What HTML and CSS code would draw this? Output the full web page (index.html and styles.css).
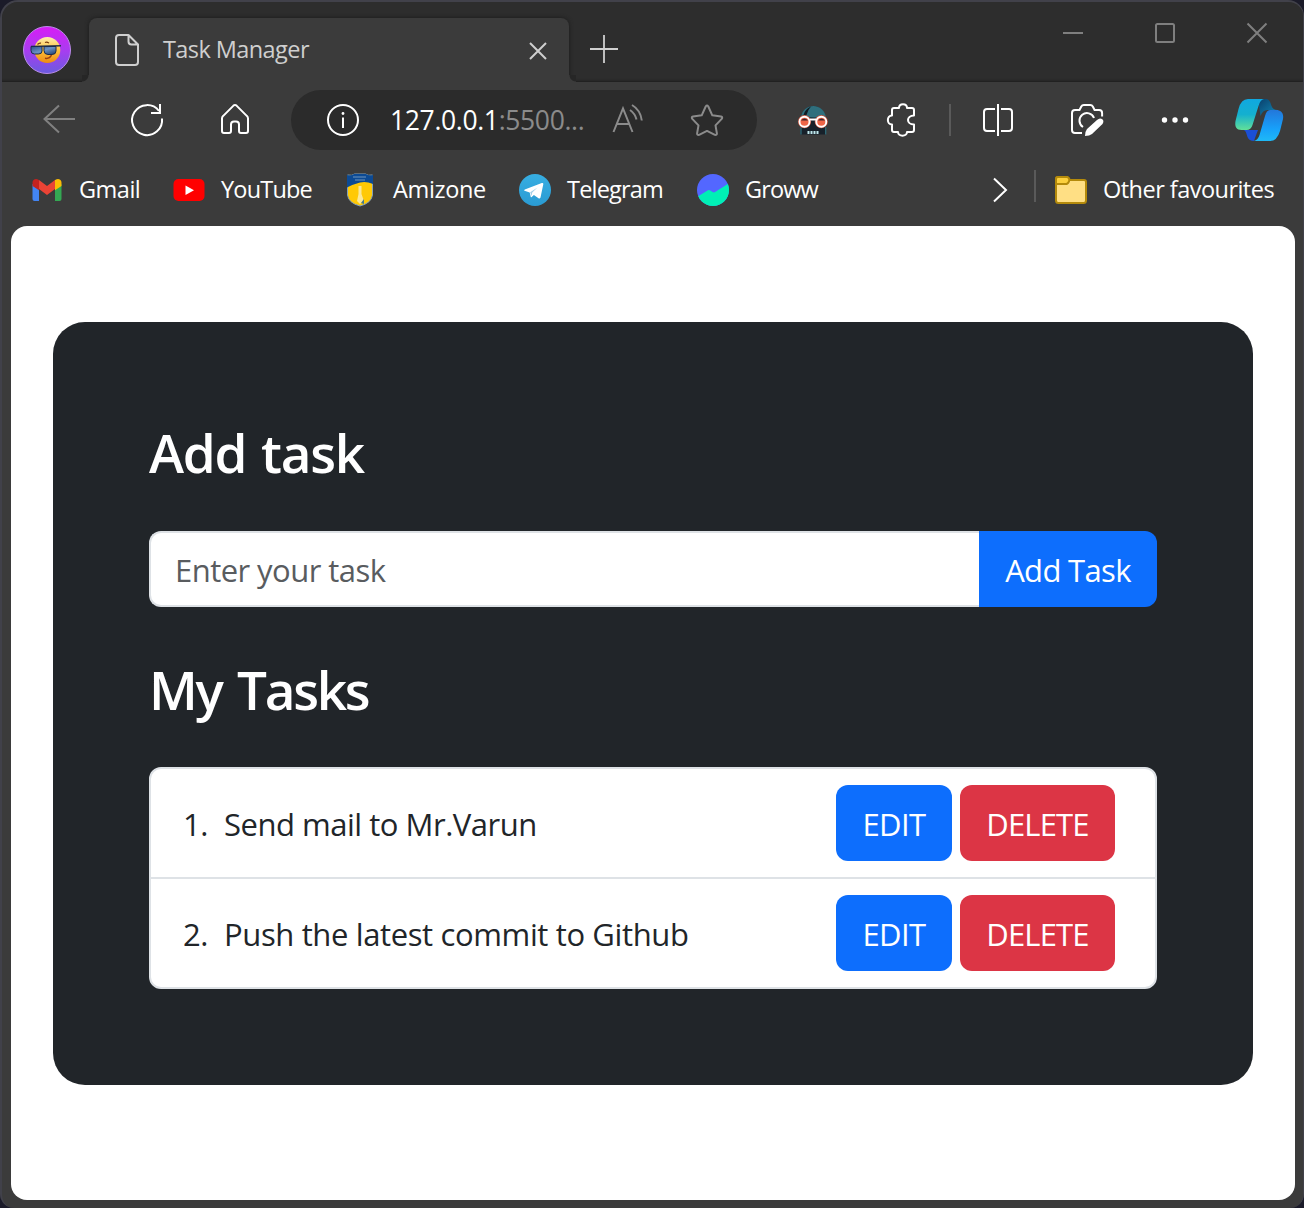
FILE: index.html
```html
<!DOCTYPE html>
<html lang="en">
<head>
<meta charset="utf-8">
<title>Task Manager</title>
<link rel="stylesheet" href="styles.css">
</head>
<body>
<div class="window">
  <header class="tabstrip">
    <svg class="avatar" viewBox="22 25 50 50">
      <defs>
        <linearGradient id="av" x1="0" y1="0" x2="0" y2="1"><stop offset="0" stop-color="#d91cf6"/><stop offset=".5" stop-color="#a93cf0"/><stop offset="1" stop-color="#6a5be0"/></linearGradient>
        <linearGradient id="face" x1="0" y1="0" x2="0" y2="1"><stop offset="0" stop-color="#fff0b0"/><stop offset=".5" stop-color="#ffc23c"/><stop offset="1" stop-color="#ee8a12"/></linearGradient>
        <linearGradient id="lens" x1="0" y1="0" x2="1" y2="1"><stop offset="0" stop-color="#2c4f86"/><stop offset=".5" stop-color="#6b93c4"/><stop offset="1" stop-color="#1d3a6c"/></linearGradient>
      </defs>
      <circle cx="47" cy="50" r="23.5" fill="url(#av)" stroke="#b98be8"/>
      <circle cx="47.300" cy="50" r="13" fill="url(#face)"/>
      <path d="M37.500 44.500q1.500-1.800 3.500-1.300M45 42.500q2-1 4 .6" fill="none" stroke="#7a3c10" stroke-width="1.200"/>
      <path d="M31 46.500L61 45.800" stroke="#26324a" stroke-width="1.400"/>
      <path d="M31 46.500h11v4.500q0 3-3.500 3h-4q-3.500 0-3.500-3.500zM44 46.500h12v4.500q0 3.500-4 3.500h-4q-4 0-4-4z" fill="url(#lens)" stroke="#1c2c4c"/>
      <path d="M45 58.300q4.500.8 6.500-3.300" fill="none" stroke="#9c3f12" stroke-width="1.500"/>
    </svg>
    <div class="tab">
      <svg class="tab-icon" viewBox="114 33 26 34" fill="none" stroke="#cfcfcf" stroke-width="2" stroke-linejoin="round"><path d="M119 35h9.500l9.500 9.500v17.500q0 3-3 3h-16q-3 0-3-3v-24q0-3 3-3zM128.500 35v6.500q0 3 3 3h6.500"/></svg>
      <span class="t tab-title">Task Manager</span>
      <svg class="tab-close" viewBox="528 41 20 20" stroke="#cfcfcf" stroke-width="2"><path d="M530 43l16 16M546 43l-16 16"/></svg>
    </div>
    <svg class="new-tab" viewBox="588 33 32 32" stroke="#cfcfcf" stroke-width="1.800"><path d="M590 49h28M604 35v28"/></svg>
    <div class="controls">
      <svg viewBox="1058 18 30 30" fill="none" stroke="#7f7f7f" stroke-width="2"><path d="M1063 33h20"/></svg>
      <svg viewBox="1150 18 30 30" fill="none" stroke="#7f7f7f" stroke-width="2"><rect x="1156" y="24" width="18" height="18" rx="1.500"/></svg>
      <svg viewBox="1242 18 30 30" fill="none" stroke="#7f7f7f" stroke-width="2"><path d="M1247.500 23.500l19 19M1266.500 23.500l-19 19"/></svg>
    </div>
  </header>

  <nav class="toolbar">
    <svg class="slot" viewBox="15 90 88 60" fill="none" stroke="#808080" stroke-width="2"><path d="M75 119H44.500M59 105.500L44.500 119L59 132.500"/></svg>
    <svg class="slot" viewBox="103 90 88 60" fill="none" stroke="#fff" stroke-width="2"><path d="M162 118.500A15 15 0 1 1 159 111M160 104v9h-9" /></svg>
    <svg class="slot" viewBox="191 90 88 60" fill="none" stroke="#fff" stroke-width="2" stroke-linejoin="round"><path d="M222 118.500q0-1.500 1-2.400l10.500-10.500q1.500-1.300 3 0l10.500 10.500q1 .9 1 2.400v12.500q0 2-2 2h-5q-2 0-2-2v-6.500q0-3-3-3h-2q-3 0-3 3v6.500q0 2-2 2h-5q-2 0-2-2z"/></svg>
    <div class="address">
      <svg class="info" viewBox="326 103 34 34" fill="none" stroke="#fff" stroke-width="2"><circle cx="343" cy="120" r="15"/><path d="M343 117.500v10.500"/><circle cx="343" cy="113.500" r="1.400" fill="#fff" stroke="none"/></svg>
      <span class="t url">127.0.0.1<span class="port">:5500...</span></span>
      <svg class="read" viewBox="610 102 36 34" fill="none" stroke="#8b8b8b" stroke-width="2"><path d="M613.500 132l9.500-23.500l9.500 23.500M616.500 124h13M630 110q5 3.500 6.500 9.500M632 105q8.500 5 9.800 15.500"/></svg>
      <svg class="star" viewBox="690 103 34 34" fill="none" stroke="#8b8b8b" stroke-width="2" stroke-linejoin="round"><path d="M705.700 106.500q1.300-1.800 2.600 0l4 8.800l8.700 1.200q2 .6.700 2.400l-6.200 6.500l1.400 8q0 2-2 1.500l-7.900-4l-7.900 4q-2 .5-2-1.500l1.400-8l-6.200-6.500q-1.300-1.800.7-2.400l8.700-1.200z"/></svg>
    </div>
    <svg class="slot" viewBox="769 90 88 60">
      <path d="M800.500 134.500v-14a12.700 14.500 0 0 1 25.400 0v14z" fill="#17212a"/>
      <path d="M801 117c1-7 6-11 12.500-11s12 5 12.500 12z" fill="#2f6f7d"/>
      <path d="M803.500 115q1.500-6 7.500-8.500q-3 3-4.500 8.500z" fill="#111c24"/>
      <path d="M801 127v7.500M825.700 127v7.500" stroke="#2f6f7d" stroke-width="1.200"/>
      <g fill="#ee5f45" stroke="#c8553f" stroke-width="3.200"><circle cx="804.500" cy="121.700" r="5"/><circle cx="821.300" cy="121.700" r="5"/></g>
      <g fill="#ef6547" stroke="#fff" stroke-width="1.900"><circle cx="804.500" cy="121.700" r="5"/><circle cx="821.300" cy="121.700" r="5"/></g>
      <path d="M801 120.500q3.500-4 7 0zM818 120.500q3.500-4 7 0z" fill="#43252b"/>
      <path d="M810 119.500h6" stroke="#fff" stroke-width="2"/>
      <path d="M807.500 132.500h11.500" stroke="#bfe8ed" stroke-width="3" stroke-dasharray="2 1"/>
    </svg>
    <svg class="slot puzzle" viewBox="858 90 88 60" fill="none" stroke="#fff" stroke-width="2" stroke-linejoin="round"><path d="M892 110q0-2 2-2h5c0-5 8-5 8 0h5q2 0 2 2v5.500c-8 0-8 9 0 9v5.500q0 2-2 2h-5c0 5-9 5-9 0h-4q-2 0-2-2v-5.500c-5.500 0-5.500-9 0-9z"/></svg>
    <i class="divider"></i>
    <svg class="slot split" viewBox="954 90 88 60" fill="none" stroke="#fff" stroke-width="2"><path d="M998 104v32M995 109h-8q-3 0-3 3v16q0 3 3 3h8M1001 109h8q3 0 3 3v16q0 3-3 3h-8"/></svg>
    <svg class="slot camera" viewBox="1043 90 88 60" fill="none" stroke="#fff" stroke-width="2"><path d="M1082 133h-7q-3 0-3-3v-17q0-3 3-3h4.500l1.800-3.500q.8-1.500 2.500-1.500h6.500q1.700 0 2.500 1.500l1.800 3.500h4.500q3 0 3 3v3.500M1083 127A7.500 7.500 0 1 1 1094 118"/><path d="M1097 120q2.500-2.500 5-1t.5 5l-10.500 10q-2.500 2-7 2q0-4.500 2-7z" fill="#fff" stroke="none"/></svg>
    <svg class="slot" viewBox="1131 90 88 60" fill="#fff"><circle cx="1164.500" cy="120" r="2.700"/><circle cx="1175" cy="120" r="2.700"/><circle cx="1185.500" cy="120" r="2.700"/></svg>
    <svg class="copilot" viewBox="1219 90 80 60">
      <defs>
        <linearGradient id="c1" x1="0" y1="0" x2="0" y2="1"><stop offset="0" stop-color="#10a8e0"/><stop offset=".5" stop-color="#14b0cf"/><stop offset="1" stop-color="#62e098"/></linearGradient>
        <linearGradient id="c2" x1="0" y1="0" x2="0" y2="1"><stop offset="0" stop-color="#2377da"/><stop offset=".6" stop-color="#17a0fa"/><stop offset="1" stop-color="#1fb9f6"/></linearGradient>
        <linearGradient id="c3" x1="0" y1="0" x2="1" y2="1"><stop offset="0" stop-color="#0a3f6b"/><stop offset="1" stop-color="#1187b5"/></linearGradient>
      </defs>
      <path d="M1258 99h8q3 0 4.500 4l1 3q1.500 4 6 4h-10q-5 0-7 6z" fill="url(#c3)"/>
      <path d="M1244 130h14l-3 8q-1 3-1 3-5 0-6.500-4l-1-3q-1-4-3.500-4z" fill="#1b4fd6"/>
      <path d="M1248 99h16q-4 1-5.500 7l-6 19q-1.500 5-6 5h-5c-5 0-7-3-6-9l3-12q2.500-10 9.500-10z" fill="url(#c1)"/>
      <path d="M1270 110h6c5 0 8 3 7 9l-3 12q-3 10-10 10h-16q4-1 5.500-6l5.500-19q1.500-6 5-6z" fill="url(#c2)"/>
    </svg>
  </nav>

  <nav class="bookmarks">
    <svg class="b-gmail" viewBox="32 178 30 24">
      <path d="M32.500 184l6.500 4v13h-4.500q-2 0-2-2z" fill="#4285f4"/><path d="M55 188l6.500-4v15q0 2-2 2H55z" fill="#34a853"/>
      <path d="M32.500 186v-3.500c0-3.500 3.800-4.500 6-2.700l.5.400v10z" fill="#c5221f"/><path d="M61.500 186v-3.500c0-3.500-3.800-4.500-6-2.700l-.5.400v10z" fill="#fbbc04"/>
      <path d="M39 180l8 6l8-6v9l-8 6l-8-6z" fill="#ea4335"/>
    </svg>
    <span class="t b1">Gmail</span>
    <svg class="b-youtube" viewBox="173 178 32 24"><rect x="173.500" y="179" width="31" height="22" rx="5" fill="#f00"/><path d="M185.500 185.500v9.500l8.500-4.700z" fill="#fff"/></svg>
    <span class="t b2">YouTube</span>
    <svg class="b-amizone" viewBox="346 173 28 34"><path d="M347.500 175q5 1 7-1h11q2 2 7 1v20q-1 8-12.500 11q-11.500-3-12.500-11z" fill="#ffc905" stroke="#83a1b8"/><path d="M347 175q5 1 7-1h12q2 2 7 1v9q-7-3-13-1.500t-13 5z" fill="#0c4a94"/><path d="M353 177h13M355 180h10" stroke="#4f7daf" stroke-width="1.500"/><path d="M358.500 186h3v8l2.500 7-4 3-3-3 1.500-7z" fill="#fbe898"/><path d="M361 203l3-4v5z" fill="#447b8b"/></svg>
    <span class="t b3">Amizone</span>
    <svg class="b-telegram" viewBox="519 174 32 32"><defs><linearGradient id="tg" x1="0" y1="0" x2="0" y2="1"><stop offset="0" stop-color="#37aee2"/><stop offset="1" stop-color="#2a9bd3"/></linearGradient></defs><circle cx="535" cy="190" r="16" fill="url(#tg)"/><path d="M524.500 190.700q-1-.6.300-1.300l17-6.400q1.700-.5 1.500 1.300l-2.800 13.200q-.5 1.500-2 .8l-4.600-3.400-2.200 2.200q-.8.600-1-.3l-1-4.300z" fill="#fff"/><path d="M530.200 192.300l7.300-4.700-5.200 5-.8 3.500z" fill="#a4cfe8"/></svg>
    <span class="t b4">Telegram</span>
    <svg class="b-groww" viewBox="697 174 32 32"><defs><clipPath id="gw"><circle cx="713" cy="190" r="16"/></clipPath></defs><g clip-path="url(#gw)"><path d="M697 174h32v32h-32z" fill="#5367ff"/><path d="M697 197l10.500-6.500q1.500-1 3 .3l2 1.200q1.500.9 3-.3l14-8.700v23h-32.500z" fill="#00f0b5"/></g></svg>
    <span class="t b5">Groww</span>
    <svg class="more" viewBox="990 176 22 28" fill="none" stroke="#fff" stroke-width="2"><path d="M994 178.500L1006 190l-12 11.500"/></svg>
    <i class="divider low"></i>
    <svg class="folder" viewBox="1054 175 34 30" stroke="#b48a0b" stroke-width="2" stroke-linejoin="round"><path d="M1056 179q0-2 2-2h9q1.500 0 3 3h14q2 0 2 2v18.500q0 2.500-2.500 2.500h-25q-2.500 0-2.500-2.500z" fill="#ffdf84"/><path d="M1056 179q0-2 2-2h9q1.500 0 2.500 3-1 3.500-3 4h-10.500z" fill="#fcd03e"/></svg>
    <span class="t b6">Other favourites</span>
  </nav>

  <main class="page">
    <section class="card">
      <h3 class="t first">Add task</h3>
      <div class="input-group">
        <div class="field"><span class="t ph">Enter your task</span></div>
        <button class="add t">Add Task</button>
      </div>
      <h3 class="t second">My Tasks</h3>
      <ul class="list">
        <li><span class="t num">1.</span><span class="t s1">Send mail to Mr.Varun</span><button class="edit t">EDIT</button><button class="delete t">DELETE</button></li>
        <li><span class="t num">2.</span><span class="t s2">Push the latest commit to Github</span><button class="edit t">EDIT</button><button class="delete t">DELETE</button></li>
      </ul>
    </section>
  </main>
</div>
</body>
</html>
```

FILE: styles.css
```css
* { box-sizing: border-box; }
body {
  margin: 0;
  background: #1b1b29;
  font-family: "Open Sans", "Noto Sans", sans-serif;
}
svg { display: block; flex: none; }
.t { white-space: nowrap; flex: none; }
.window {
  width: 1304px;
  height: 1208px;
  display: flex;
  flex-direction: column;
  background: #3b3b3b;
  border: 2px solid #41414a;
  border-right-width: 1px;
  border-bottom-width: 0;
  border-radius: 18px 16px 14px 14px;
  overflow: hidden;
}

/* tab strip */
.tabstrip {
  height: 80px;
  flex: none;
  display: flex;
  background: #2d2d2d;
  box-shadow: inset 0 -3px 3px -2px #1d1d1d;
}
.avatar { width: 50px; height: 50px; margin: 23px 17px 0 20px; }
.tab {
  position: relative;
  width: 480px;
  height: 64px;
  margin-top: 16px;
  padding: 0 20px 0 25px;
  display: flex;
  align-items: center;
  background: #3b3b3b;
  border-radius: 8px 8px 0 0;
  box-shadow: 0 0 4px #1a1a1a;
  clip-path: inset(-5px -8px 0 -8px);
}
.tab::before,
.tab::after {
  content: "";
  position: absolute;
  bottom: 0;
  width: 7px;
  height: 7px;
}
.tab::before { left: -7px; background: radial-gradient(circle at 0 0, #262626 6px, #3b3b3b 7px); }
.tab::after { right: -7px; background: radial-gradient(circle at 100% 0, #262626 6px, #3b3b3b 7px); }
.tab-icon { width: 26px; height: 34px; }
.tab-title { margin: -2px 0 0 23px; font-size: 23.5px; letter-spacing: -0.58px; color: #cfcfcf; }
.tab-close { width: 20px; height: 20px; margin: 2px 1px 0 auto; }
.new-tab { width: 32px; height: 32px; margin: 31px 0 0 19px; }
.controls { display: flex; gap: 62px; margin: 16px 31px 0 auto; }
.controls svg { width: 30px; height: 30px; }

/* navigation bar */
.toolbar {
  height: 76px;
  flex: none;
  display: flex;
  align-items: center;
  padding-left: 13px;
}
.slot { width: 88px; height: 60px; }
.address {
  width: 466px;
  height: 60px;
  margin: 0 12px;
  padding-left: 35px;
  flex: none;
  display: flex;
  align-items: center;
  background: #2b2b2b;
  border-radius: 30px;
}
.info { width: 34px; height: 34px; }
.url { width: 219px; margin-left: 30px; font-size: 26.5px; letter-spacing: -0.35px; color: #fff; }
.port { color: #8b8b8b; }
.read { width: 36px; height: 34px; margin-left: 1px; margin-top: -2px; }
.star { width: 34px; height: 34px; margin-left: 44px; }
.puzzle { margin-left: 1px; }
.divider { width: 2px; height: 32px; margin-left: 3px; flex: none; background: #5a5a5a; }
.split { margin-left: 3px; }
.camera { margin-left: 1px; }
.copilot { width: 80px; height: 60px; }

/* favourites bar */
.bookmarks {
  height: 64px;
  flex: none;
  display: flex;
  align-items: center;
  padding-left: 30px;
  font-size: 23.5px;
  color: #fff;
}
.bookmarks .t { margin-top: -2px; }
.b-gmail { width: 30px; height: 24px; margin-right: 17px; }
.b1 { width: 94px; letter-spacing: -0.5px; }
.b-youtube { width: 32px; height: 24px; margin-right: 16px; }
.b2 { width: 125px; letter-spacing: -0.8px; }
.b-amizone { width: 28px; height: 34px; margin-right: 19px; }
.b3 { width: 126px; letter-spacing: -0.35px; }
.b-telegram { width: 32px; height: 32px; margin-right: 16px; }
.b4 { width: 130px; letter-spacing: -0.8px; }
.b-groww { width: 32px; height: 32px; margin-right: 16px; }
.b5 { width: 245px; letter-spacing: -0.9px; }
.b6 { letter-spacing: -0.53px; }
.more { width: 22px; height: 28px; }
.low { margin: -8px 18px 0 22px; }
.folder { width: 34px; height: 30px; margin-right: 15px; }

/* page */
.page {
  width: 1284px;
  height: 974px;
  flex: none;
  margin: 4px 0 0 9px;
  padding: 96px 42px;
  background: #fff;
  border-radius: 16px;
}
.card {
  height: 763px;
  padding: 97px 96px 96px;
  background: #212529;
  border-radius: 32px;
  color: #fff;
}
h3 { margin: 0; font-size: 53px; line-height: 67px; font-weight: 600; }
.first { letter-spacing: -1.3px; word-spacing: 2.5px; }
.second { margin-top: 49px; letter-spacing: -2.3px; word-spacing: 4px; }
.input-group { display: flex; height: 76px; margin-top: 45px; font-size: 31px; }
.field {
  width: 830px;
  display: flex;
  align-items: center;
  padding: 2px 24px 0 24px;
  background: #fff;
  border: 2px solid #dee2e6;
  border-right: 0;
  border-radius: 12px 0 0 12px;
  color: #595c5f;
}
.ph { letter-spacing: -0.55px; }
button {
  height: 76px;
  padding: 2px 0 0;
  flex: none;
  border: 0;
  border-radius: 12px;
  color: #fff;
  font: inherit;
}
.add { width: 178px; background: #0d6efd; border-radius: 0 12px 12px 0; letter-spacing: -0.65px; }
.edit { width: 116px; margin-left: auto; background: #0d6efd; letter-spacing: -0.6px; }
.delete { width: 155px; margin: 0 40px 0 8px; background: #dc3545; letter-spacing: -0.85px; }
.list {
  margin: 44px 0 0;
  padding: 0;
  list-style: none;
  background: #fff;
  border: 2px solid #dee2e6;
  border-radius: 12px;
  font-size: 31px;
  color: #212529;
}
.list li { height: 108px; display: flex; align-items: center; padding-left: 32px; }
.list li + li { height: 110px; border-top: 2px solid #dee2e6; }
.list span { padding-top: 2px; }
.num { width: 41px; letter-spacing: -0.5px; }
.s1 { letter-spacing: -0.48px; }
.s2 { letter-spacing: -0.37px; }
```
